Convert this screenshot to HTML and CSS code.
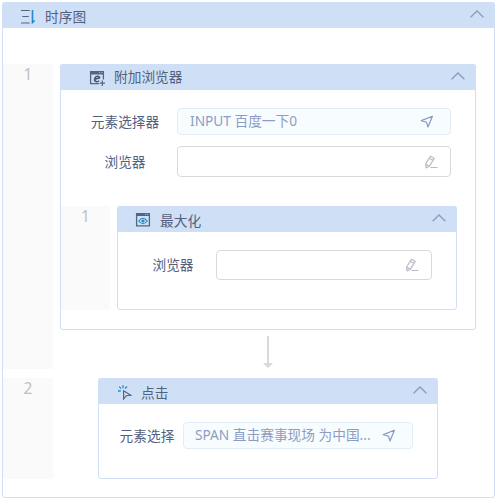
FILE: index.html
```html
<!DOCTYPE html>
<html lang="zh-CN">
<head>
<meta charset="utf-8">
<title>时序图</title>
<link rel="stylesheet" href="styles.css">
</head>
<body>
<svg class="defs" width="0" height="0">
  <symbol id="chevron" viewBox="0 0 14 8"><path d="M.6 7.3 7 1l6.4 6.3" fill="none" stroke="#8c9cc4" stroke-width="1.4"/></symbol>
  <symbol id="send" viewBox="0 0 14 14"><path d="M1.3 5.6 12.4 1.2 8 12 6.6 7.3Z" fill="none" stroke="#8799c2" stroke-width="1.2" stroke-linejoin="round"/></symbol>
  <symbol id="pencil" viewBox="0 0 14 14"><path d="M6.6 1.2 10.2 3.3 5.4 11.1 2 12.8 1.6 9ZM5.4 3.2 9 5.3M1.6 9 5.2 11.1" fill="none" stroke="#bec0c9" stroke-width="1.3" stroke-linejoin="round"/><path d="M6.5 12.5H13.5" stroke="#b5b8c8" stroke-width="1"/></symbol>
</svg>
<section class="panel root">
  <header class="bar">
    <svg class="icon" width="16" height="16" viewBox="0 0 16 16" fill="none"><path d="M1 2.5H9.7M2.2 8.5H8.7M1 15H9.7" stroke="#536582" stroke-width="1.1"/><path d="M12.5 2V14.5L14.6 12.5" stroke="#2388cc" stroke-width="1.6"/></svg>
    <h1 class="title">时序图</h1>
    <svg class="chev"><use href="#chevron"/></svg>
  </header>
  <div class="step first">
    <div class="num">1</div>
    <section class="panel browser">
      <header class="bar">
        <svg class="icon" width="16" height="16" viewBox="0 0 16 16" fill="none"><path d="M10 13.6H1.6V1.6H14.4V9.5" stroke="#536582" stroke-width="1.3"/><path d="M1 1H15V4.5H1Z" fill="#536582"/><path d="M5.6 9.2 10.6 8C10.5 5.6 6.8 5.7 5.7 8.6 4.8 12 8.6 12.5 10.1 10.6" stroke="#43556f" stroke-width="1.5"/><path d="M13.3 10.5V16M10.7 13.2H16" stroke="#536582" stroke-width="1.2"/><path d="M10.2 2.4H11.2M12.4 2.4H13.4" stroke="#cfe0f6" stroke-width=".8"/></svg>
        <h2 class="title">附加浏览器</h2>
        <svg class="chev"><use href="#chevron"/></svg>
      </header>
      <div class="row target"><span class="label">元素选择器</span><div class="field picked"><span class="value">INPUT 百度一下0</span><svg class="tool"><use href="#send"/></svg></div></div>
      <div class="row"><span class="label">浏览器</span><div class="field"><svg class="tool"><use href="#pencil"/></svg></div></div>
      <div class="step nested">
        <div class="num">1</div>
        <section class="panel maximize">
          <header class="bar">
            <svg class="icon" width="16" height="16" viewBox="0 0 16 16" fill="none"><path d="M1.6 1.6H14.4V13.8H1.6Z" stroke="#536582" stroke-width="1.3"/><path d="M1 1H15V4H1Z" fill="#536582"/><path d="M10.2 2.3H11.2M12.4 2.3H13.4" stroke="#cfe0f6" stroke-width=".8"/><path d="M3.8 9Q8 3.5 12.2 9 8 14.5 3.8 9Z" stroke="#2687c4" stroke-width="1.2"/><circle cx="8" cy="9" r="1.6" fill="#2687c4"/></svg>
            <h3 class="title">最大化</h3>
            <svg class="chev"><use href="#chevron"/></svg>
          </header>
          <div class="row"><span class="label">浏览器</span><div class="field"><svg class="tool"><use href="#pencil"/></svg></div></div>
        </section>
      </div>
    </section>
  </div>
  <div class="step second">
    <div class="num">2</div>
    <section class="panel click">
      <header class="bar">
        <svg class="icon" width="16" height="16" viewBox="0 0 16 16" fill="none"><path d="M7.6 6.8V15L10.2 11.7 14.8 11.2Z" stroke="#536582" stroke-width="1.2"/><path d="M7 1.3V4.3M3.2 2.6 5.1 4.6M2 7H4.8M11 2.5 9.1 4.5" stroke="#2687c4" stroke-width="1.3"/></svg>
        <h2 class="title">点击</h2>
        <svg class="chev"><use href="#chevron"/></svg>
      </header>
      <div class="row"><span class="label">元素选择</span><div class="field picked"><span class="value">SPAN 直击赛事现场 为中国...</span><svg class="tool"><use href="#send"/></svg></div></div>
    </section>
    <svg class="arrow" viewBox="0 0 10 32"><path d="M4 0H6V27H10L5 32 0 27H4Z" fill="#d9d9d9"/></svg>
  </div>
</section>
</body>
</html>
```
FILE: styles.css
```css
* { box-sizing: border-box; }
body {
  margin: 0;
  padding: 2px;
  background: #fff;
  color: #53617f;
  font: 13.7px/20px "Noto Sans", "Noto Sans CJK SC", sans-serif;
}
.defs { display: block; }
.panel {
  border: 1px solid #cfe0f6;
  border-radius: 3px;
  background: #fff;
}
.root { width: 493px; height: 496px; }
.bar {
  display: flex;
  align-items: center;
  height: 26px;
  margin: -1px -1px 0;
  padding: 0 11px 0 18px;
  border-radius: 3px 3px 0 0;
  background: #cfe0f6;
}
.icon { flex: none; margin-top: 2px; }
.title { margin: 4px auto 0 9px; font: inherit; }
.chev { width: 14px; height: 8px; margin-top: -2px; }
.step { position: relative; display: flex; align-items: flex-start; }
.num {
  flex: none;
  align-self: stretch;
  width: 50px;
  background: #fafafa;
  color: #bfbfbf;
  font-size: 15.5px;
  text-align: center;
}
.first { height: 305px; margin-top: 36px; }
.browser { width: 416px; height: 266px; margin-left: 7px; }
.browser > .bar { padding: 0 11px 0 29px; }
.browser > .bar .title { margin-top: 0; }
.browser > .bar .icon { margin-top: 1px; }
.row { display: flex; align-items: center; }
.label { flex: none; text-align: center; white-space: nowrap; }
.field {
  display: flex;
  align-items: center;
  width: 274px;
  height: 31px;
  padding: 0 12px;
  border: 1px solid #d9d9d9;
  border-radius: 4px;
}
.picked { height: 27px; background: #f7fcff; border-color: #e1edf7; }
.value { margin-top: -2px; color: #8d9cc2; white-space: nowrap; }
.tool { flex: none; width: 14px; height: 14px; margin-left: auto; }
.picked .tool { margin-right: 4px; }
.browser > .row { padding-left: 13px; }
.browser > .row .label { width: 103px; padding-right: 1px; }
.target { margin: 18px 0 11px; }
.nested { height: 104px; margin-top: 29px; }
.nested > .num { width: 49px; }
.maximize { width: 340px; height: 104px; margin-left: 7px; }
.maximize .row { padding: 18px 0 0 13px; }
.maximize .label { width: 85px; padding-right: 1px; }
.maximize .field { width: 216px; height: 30px; }
.second { height: 101px; margin-top: 9px; }
.click { width: 340px; height: 101px; margin-left: 45px; }
.click .row { padding: 18px 0 0 13px; }
.click .label { width: 71px; padding-right: 1px; }
.click .field { width: 230px; padding: 0 11px; }
.click .tool { margin-right: 5px; }
.arrow { position: absolute; left: 260px; top: -42px; width: 10px; height: 32px; }
```
